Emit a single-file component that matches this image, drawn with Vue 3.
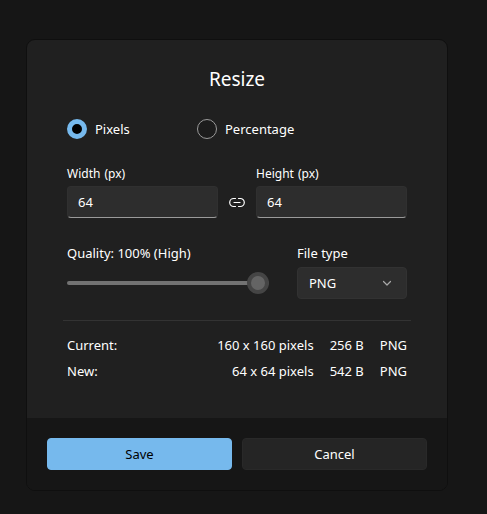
<script setup>
import { ref } from 'vue'

const unit = ref('pixels')
const width = ref('64')
const height = ref('64')
const quality = ref(100)
const fileType = ref('PNG')

const results = [
  { name: 'Current:', size: '160 x 160 pixels', bytes: '256 B', type: 'PNG' },
  { name: 'New:', size: '64 x 64 pixels', bytes: '542 B', type: 'PNG' },
]
</script>

<template>
  <main class="page">
    <form class="dialog" @submit.prevent>
      <div class="content">
        <h1>Resize</h1>

        <div class="units">
          <label><input v-model="unit" type="radio" name="unit" value="pixels" />Pixels</label>
          <label><input v-model="unit" type="radio" name="unit" value="percentage" />Percentage</label>
        </div>

        <div class="dimensions">
          <div class="field">
            <label for="width"><span>Width</span><span>(px)</span></label>
            <input id="width" v-model="width" type="text" inputmode="numeric" />
          </div>
          <button class="link" type="button" aria-label="Maintain aspect ratio">
            <svg viewBox="0 0 16 12" width="16" height="12" fill="none" stroke="currentColor" stroke-width="1.2" stroke-linecap="round">
              <path d="M6.500 2.500H4.700a3.500 3.500 0 0 0 0 8h1.800M9.500 2.500h1.800a3.500 3.500 0 0 1 0 8H9.500M5 6.500h6" />
            </svg>
          </button>
          <div class="field">
            <label for="height"><span>Height</span><span>(px)</span></label>
            <input id="height" v-model="height" type="text" inputmode="numeric" />
          </div>
        </div>

        <div class="output">
          <div class="quality">
            <label for="quality">Quality: {{ quality }}% (High)</label>
            <input id="quality" v-model="quality" type="range" min="1" max="100" />
          </div>
          <div class="type">
            <label for="type">File type</label>
            <div class="select">
              <select id="type" v-model="fileType">
                <option>PNG</option>
                <option>JPEG</option>
                <option>BMP</option>
              </select>
              <svg viewBox="0 0 10 6" width="10" height="6" fill="none" stroke="currentColor" stroke-width="1.2" stroke-linecap="round" stroke-linejoin="round">
                <path d="M1.500 1.500L5 5l3.500-3.500" />
              </svg>
            </div>
          </div>
        </div>

        <hr />

        <table>
          <tbody>
            <tr v-for="row in results" :key="row.name">
              <th scope="row">{{ row.name }}</th>
              <td>{{ row.size }}</td>
              <td>{{ row.bytes }}</td>
              <td>{{ row.type }}</td>
            </tr>
          </tbody>
        </table>
      </div>

      <footer>
        <button class="save" type="submit">Save</button>
        <button class="cancel" type="button">Cancel</button>
      </footer>
    </form>
  </main>
</template>

<style>
body {
  margin: 0;
  background: #161616;
}
</style>

<style scoped>
* {
  box-sizing: border-box;
}

.page {
  padding: 39px 39px 23px 26px;
  color: #fff;
  font: 13px/20px "Noto Sans", "Open Sans", sans-serif;
}

.dialog {
  overflow: hidden;
  border: 1px solid #0f0f0f;
  border-radius: 9px;
  background: #202020;
}

.content {
  padding: 24px 40px 34px;
}

h1 {
  margin: 0;
  font-size: 19px;
  font-weight: 400;
  line-height: 30px;
  text-align: center;
}

input,
select,
button {
  margin: 0;
  font: inherit;
  color: inherit;
}

.units {
  display: grid;
  grid-template-columns: 130px 1fr;
  margin-top: 25px;
}

.units label {
  display: flex;
  align-items: center;
  gap: 8px;
}

.units input {
  appearance: none;
  width: 20px;
  height: 20px;
  border: 1px solid #9a9a9a;
  border-radius: 50%;
  background: #1c1c1c;
}

.units input:checked {
  border: 5px solid #76b9ed;
  background: #000;
}

.dimensions {
  display: grid;
  grid-template-columns: 1fr 38px 1fr;
  align-items: end;
  margin-top: 27px;
}

.field {
  display: grid;
  gap: 4px;
}

.field label {
  display: flex;
  gap: 4px;
  font-size: 12px;
  line-height: 16px;
}

.field input {
  width: 100%;
  height: 32px;
  padding: 0 10px;
  border: 1px solid #303030;
  border-bottom-color: #9a9a9a;
  border-radius: 4px;
  outline: none;
  background: #2d2d2d;
}

.link {
  display: grid;
  place-items: center;
  height: 32px;
  padding: 0;
  border: 0;
  background: none;
}

.output {
  display: grid;
  grid-template-columns: 1fr 110px;
  gap: 28px;
  margin-top: 25px;
}

.quality,
.type {
  display: grid;
  gap: 4px;
}

.quality input {
  appearance: none;
  width: 100%;
  height: 32px;
  background: none;
}

.quality input::-webkit-slider-runnable-track {
  height: 4px;
  border-radius: 2px;
  background: #727272;
}

.quality input::-webkit-slider-thumb {
  appearance: none;
  width: 22px;
  height: 22px;
  margin-top: -9px;
  border: 4px solid #454545;
  border-radius: 50%;
  background: #646464;
}

.select {
  display: grid;
  align-items: center;
}

.select select,
.select svg {
  grid-area: 1 / 1;
}

.select select {
  appearance: none;
  width: 100%;
  height: 32px;
  padding: 0 11px;
  border: 1px solid #323232;
  border-radius: 4px;
  background: #2d2d2d;
}

.select svg {
  z-index: 1;
  justify-self: end;
  margin-right: 15px;
  color: #a8a8a8;
  pointer-events: none;
}

hr {
  height: 1px;
  margin: 21px -4px 11px;
  border: 0;
  background: #333;
}

table {
  width: 100%;
  border-collapse: collapse;
  line-height: 26px;
}

th,
td {
  padding: 0;
  font-weight: 400;
  text-align: right;
  white-space: nowrap;
}

th {
  width: 100%;
  text-align: left;
}

td + td {
  padding-left: 16px;
}

footer {
  display: grid;
  grid-template-columns: 1fr 1fr;
  gap: 10px;
  padding: 20px;
  background: #161616;
}

footer button {
  height: 32px;
  padding: 0;
  border: 1px solid #292929;
  border-radius: 4px;
  background: #252525;
}

footer .save {
  border-color: #76b9ed;
  background: #76b9ed;
  color: #000;
}
</style>
